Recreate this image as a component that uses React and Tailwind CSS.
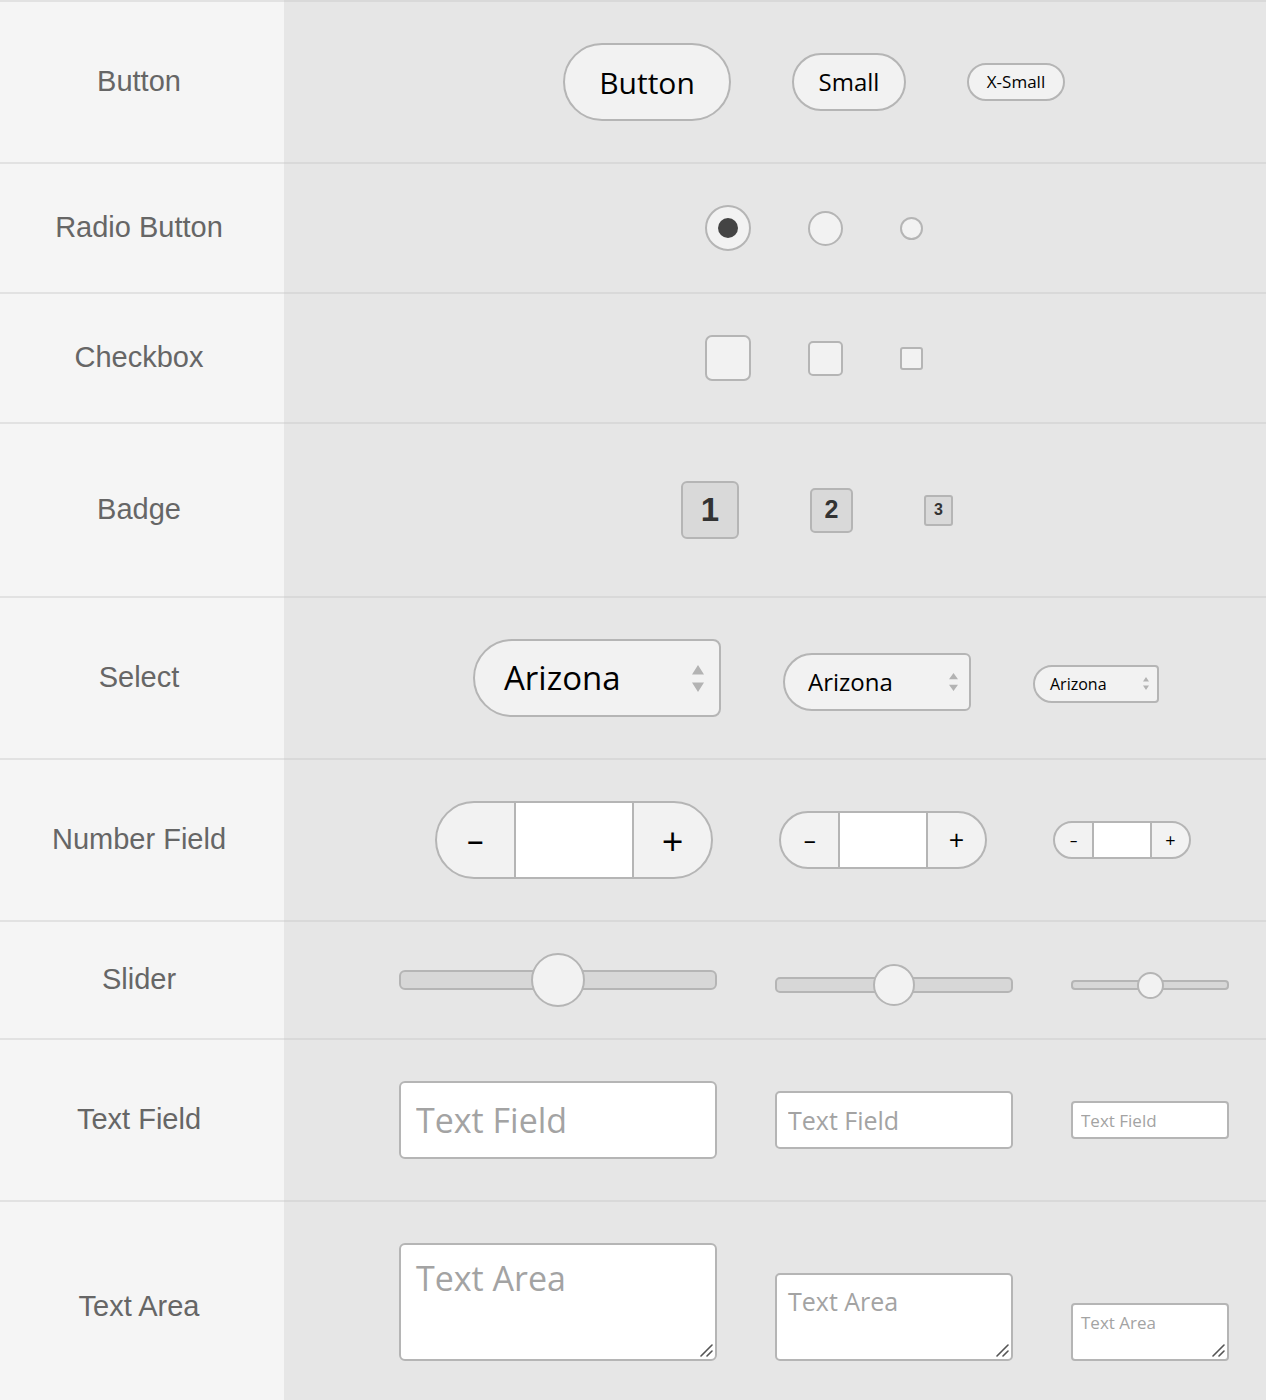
import React from 'react';

const ui = "font-['Open_Sans',sans-serif]";

const Row = ({ label, height, gap, pad = 'pl-[78px]', align = 'items-center', labelPad = '', children }) => (
  <div className={`flex ${height}`}>
    <div className={`w-[284px] shrink-0 border-t-2 border-[#e2e2e2] bg-[#f5f5f5] flex items-center justify-center pr-[6px] font-['Liberation_Sans',Arial,sans-serif] text-[29px] text-[#666] ${labelPad}`}>
      {label}
    </div>
    <div className={`flex-1 border-t-2 border-[#d9d9d9] bg-[#e6e6e6] flex justify-center ${align} ${gap} ${pad}`}>
      {children}
    </div>
  </div>
);

// up/down triangles on the right of a select
const Arrows = ({ className }) => (
  <svg className={className} viewBox="0 0 12 27" preserveAspectRatio="none">
    <path d="M6 0 L12 9.5 L0 9.5 Z M0 17.5 L12 17.5 L6 27 Z" fill="#b3b3b3" />
  </svg>
);

const Select = ({ box, text, pad, arrows }) => (
  <div className={`flex items-center justify-between border-2 border-[#b5b5b5] bg-[#f2f2f2] text-black ${box} ${pad}`}>
    <span className={text}>Arizona</span>
    <Arrows className={arrows} />
  </div>
);

const NumberField = ({ box, side, field, minus, plus }) => (
  <div className={`flex overflow-hidden rounded-full border-2 border-[#b5b5b5] bg-[#f2f2f2] text-black ${box}`}>
    <button className={`flex items-center justify-center ${side}`}>
      <span className={`inline-block ${minus}`}>-</span>
    </button>
    <input type="text" className={`h-full border-x-2 border-[#b5b5b5] bg-white outline-none ${field}`} />
    <button className={`flex items-center justify-center ${side}`}>
      <span className={plus}>+</span>
    </button>
  </div>
);

const Slider = ({ track, thumb, className = '' }) => (
  <div className={`grid place-items-center ${className}`}>
    <div className={`col-start-1 row-start-1 border-2 border-[#b5b5b5] bg-[#d7d7d7] ${track}`} />
    <div className={`col-start-1 row-start-1 rounded-full border-2 border-[#b5b5b5] bg-[#f2f2f2] ${thumb}`} />
  </div>
);

// textarea with the grip drawn in the corner
const TextArea = ({ className }) => (
  <div className="relative">
    <textarea
      placeholder="Text Area"
      className={`block resize-none border-2 border-[#b5b5b5] bg-white font-medium text-black outline-none placeholder:text-[#a3a3a3] ${className}`}
    />
    <svg className="pointer-events-none absolute bottom-[4px] right-[4px] h-[13px] w-[13px]" viewBox="0 0 13 13">
      <path d="M1 12 L12 1 M7 12 L12 7" stroke="#555" strokeWidth="1.6" strokeLinecap="round" />
    </svg>
  </div>
);

export default function App() {
  return (
    <div className={`w-[1266px] bg-[#e6e6e6] ${ui}`}>
      <Row label="Button" height="h-[162px]" gap="gap-[61px]">
        <button className="flex h-[78px] w-[168px] items-center justify-center rounded-full border-2 border-[#b5b5b5] bg-[#f2f2f2] text-[30px] font-medium text-black">
          Button
        </button>
        <button className="flex h-[58px] w-[114px] items-center justify-center rounded-full border-2 border-[#b5b5b5] bg-[#f2f2f2] text-[24px] font-medium text-black">
          Small
        </button>
        <button className="flex h-[38px] w-[98px] items-center justify-center rounded-full border-2 border-[#b5b5b5] bg-[#f2f2f2] text-[17px] font-medium text-black">
          X-Small
        </button>
      </Row>

      <Row label="Radio Button" height="h-[130px]" gap="gap-[57px]">
        <div className="flex h-[46px] w-[46px] items-center justify-center rounded-full border-2 border-[#b5b5b5] bg-[#f2f2f2]">
          <div className="h-[20px] w-[20px] rounded-full bg-[#444]" />
        </div>
        <div className="h-[35px] w-[35px] rounded-full border-2 border-[#b5b5b5] bg-[#f2f2f2]" />
        <div className="h-[23px] w-[23px] rounded-full border-2 border-[#b5b5b5] bg-[#f2f2f2]" />
      </Row>

      <Row label="Checkbox" height="h-[130px]" gap="gap-[57px]">
        <div className="h-[46px] w-[46px] rounded-[7px] border-2 border-[#b5b5b5] bg-[#f2f2f2]" />
        <div className="h-[35px] w-[35px] rounded-[5px] border-2 border-[#b5b5b5] bg-[#f2f2f2]" />
        <div className="h-[23px] w-[23px] rounded-[3px] border-2 border-[#b5b5b5] bg-[#f2f2f2]" />
      </Row>

      <Row label="Badge" height="h-[174px]" gap="gap-[71px]" pad="pl-[84px]">
        <div className="flex h-[58px] w-[58px] items-center justify-center rounded-[6px] border-2 border-[#b5b5b5] bg-[#d9d9d9] font-['Liberation_Sans',Arial,sans-serif] text-[33px] font-bold text-[#333]">
          1
        </div>
        <div className="flex h-[45px] w-[43px] items-center justify-center rounded-[5px] border-2 border-[#b5b5b5] bg-[#d9d9d9] font-['Liberation_Sans',Arial,sans-serif] text-[25px] font-bold text-[#333]">
          2
        </div>
        <div className="flex h-[31px] w-[29px] items-center justify-center rounded-[3px] border-2 border-[#b5b5b5] bg-[#d9d9d9] font-['Liberation_Sans',Arial,sans-serif] text-[16px] font-bold text-[#333]">
          3
        </div>
      </Row>

      <Row label="Select" height="h-[162px]" gap="gap-[62px]" pad="pl-[82px]">
        <Select
          box="h-[78px] w-[248px] rounded-l-[39px] rounded-r-[8px]"
          pad="pl-[29px] pr-[15px]"
          text="text-[33px] font-medium"
          arrows="h-[27px] w-[12px]"
        />
        <Select
          box="mt-[8px] h-[58px] w-[188px] rounded-l-[29px] rounded-r-[6px]"
          pad="pl-[23px] pr-[11px]"
          text="text-[24px] font-medium"
          arrows="h-[18px] w-[9px]"
        />
        <Select
          box="mt-[11px] h-[38px] w-[126px] rounded-l-[19px] rounded-r-[4px]"
          pad="pl-[15px] pr-[8px]"
          text="text-[16px] font-medium"
          arrows="h-[13px] w-[6px]"
        />
      </Row>

      <Row label="Number Field" height="h-[162px]" gap="gap-[66px]" pad="pl-[76px]">
        <NumberField
          box="h-[78px] w-[278px]"
          side="w-[77px]"
          field="w-[120px]"
          minus="scale-x-[1.8] text-[32px] font-medium"
          plus="text-[38px]"
        />
        <NumberField
          box="h-[58px] w-[208px]"
          side="w-[57px]"
          field="w-[90px]"
          minus="scale-x-[1.75] text-[24px] font-medium"
          plus="text-[27px]"
        />
        <NumberField
          box="h-[38px] w-[138px]"
          side="w-[37px]"
          field="w-[60px]"
          minus="scale-x-[1.6] text-[16px] font-medium"
          plus="text-[18px]"
        />
      </Row>

      <Row label="Slider" height="h-[118px]" gap="gap-[58px]">
        <Slider track="h-[20px] w-[318px] rounded-[6px]" thumb="h-[54px] w-[54px]" />
        <Slider className="mt-[10px]" track="h-[16px] w-[238px] rounded-[5px]" thumb="h-[42px] w-[42px]" />
        <Slider className="mt-[10px]" track="h-[10px] w-[158px] rounded-[4px]" thumb="h-[27px] w-[27px]" />
      </Row>

      <Row label="Text Field" height="h-[162px]" gap="gap-[58px]">
        <input
          type="text"
          placeholder="Text Field"
          className="h-[78px] w-[318px] rounded-[6px] border-2 border-[#b5b5b5] bg-white pl-[15px] text-[34px] font-medium text-black outline-none placeholder:text-[#a3a3a3]"
        />
        <input
          type="text"
          placeholder="Text Field"
          className="h-[58px] w-[238px] rounded-[5px] border-2 border-[#b5b5b5] bg-white pl-[11px] text-[25px] font-medium text-black outline-none placeholder:text-[#a3a3a3]"
        />
        <input
          type="text"
          placeholder="Text Field"
          className="h-[38px] w-[158px] rounded-[4px] border-2 border-[#b5b5b5] bg-white pl-[8px] text-[17px] font-medium text-black outline-none placeholder:text-[#a3a3a3]"
        />
      </Row>

      <Row label="Text Area" height="h-[201px]" gap="gap-[58px]" align="items-end pb-[40px]" labelPad="pt-[10px]">
        <TextArea className="h-[118px] w-[318px] rounded-[6px] pl-[15px] pt-[13px] text-[34px] leading-[40px]" />
        <TextArea className="h-[88px] w-[238px] rounded-[5px] pl-[11px] pt-[11px] text-[25px] leading-[30px]" />
        <TextArea className="h-[58px] w-[158px] rounded-[4px] pl-[8px] pt-[8px] text-[17px] leading-[20px]" />
      </Row>
    </div>
  );
}
